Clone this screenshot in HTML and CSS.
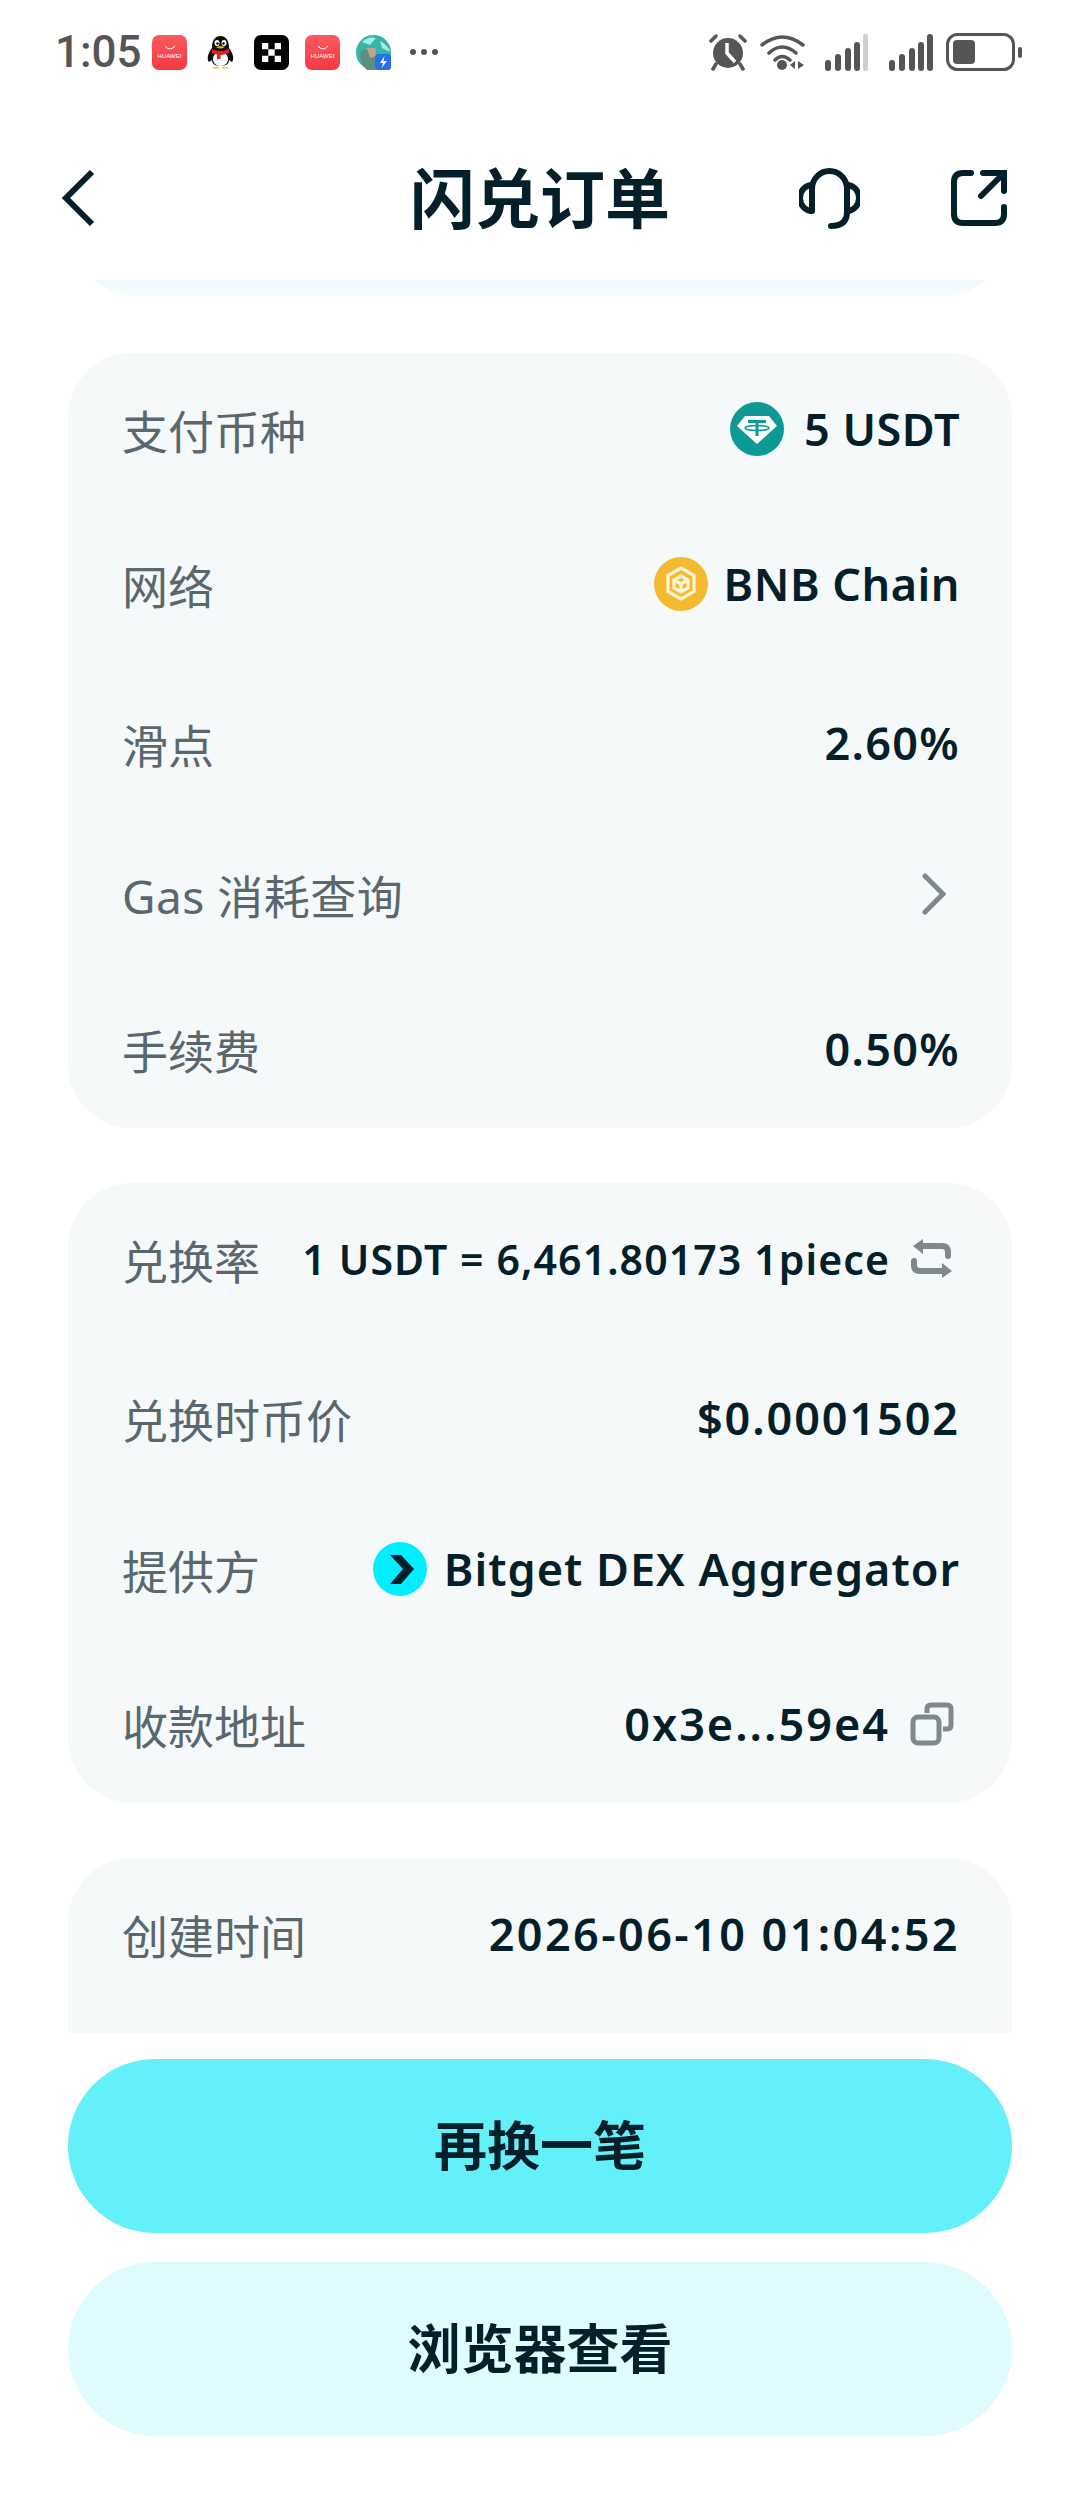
FILE: index.html
```html
<!DOCTYPE html>
<html lang="zh">
    <head>
        <meta charset="utf-8">
        <title>闪兑订单</title>
        <link rel="stylesheet" href="styles.css">
    </head>
    <body>
        <div class="status-bar">
            <span class="time">1:05</span>
            <div class="status-apps">
                <div class="app-huawei">
                    <svg class="app-smile" viewBox="0 0 12 6"><path d="M1 1 Q6 7 11 1" fill="none" stroke="#fff" stroke-width="1"/></svg>
                    <span class="app-huawei-text">HUAWEI</span>
                </div>
                <svg class="app-icon" viewBox="0 0 35 35">
                    <path d="M17.500 1 C24 1 26 7 26 13 C29 17 32 23 29 27 L26 25 C26 28 24 31 17.500 31 C11 31 9 28 9 25 L6 27 C3 23 6 17 9 13 C9 7 11 1 17.500 1 Z" fill="#0a0a0a"/>
                    <path d="M17.500 17 C23 17 25 21 25 24 C25 28 22 31 17.500 31 C13 31 10 28 10 24 C10 21 12 17 17.500 17 Z" fill="#fff"/>
                    <path d="M9 14 Q17.500 18 26 14 L26 18 Q20 20 17.500 20 L17.500 24 L14 24 L14 19.500 Q11 19 9 18 Z" fill="#e0201f"/>
                    <ellipse cx="14" cy="8" rx="2.500" ry="3" fill="#fff"/>
                    <ellipse cx="21" cy="8" rx="2.500" ry="3" fill="#fff"/>
                    <circle cx="14.500" cy="8.500" r="1.200" fill="#000"/>
                    <circle cx="20.500" cy="8.500" r="1.200" fill="#000"/>
                    <path d="M13 12 Q17.500 10 22 12 Q17.500 15 13 12 Z" fill="#f5a81c"/>
                    <path d="M10 32 H16 V33.500 H10 Z M19 32 H25 V33.500 H19 Z" fill="#f5c33b"/>
                </svg>
                <svg class="app-icon" viewBox="0 0 35 35">
                    <rect width="35" height="35" rx="7" fill="#000"/>
                    <path d="M8 8 H14.300 V14.300 H8 Z M20.700 8 H27 V14.300 H20.700 Z M14.300 14.300 H20.700 V20.700 H14.300 Z M8 20.700 H14.300 V27 H8 Z M20.700 20.700 H27 V27 H20.700 Z" fill="#fff"/>
                </svg>
                <div class="app-huawei">
                    <svg class="app-smile" viewBox="0 0 12 6"><path d="M1 1 Q6 7 11 1" fill="none" stroke="#fff" stroke-width="1"/></svg>
                    <span class="app-huawei-text">HUAWEI</span>
                </div>
                <svg class="app-icon" viewBox="0 0 35 35">
                    <circle cx="17.500" cy="17.500" r="17.500" fill="#35b5a6"/>
                    <path d="M6 7 Q12 1 20 3 L14 10 Z M24 6 Q32 10 34 17 L26 13 Z" fill="#a5ece0"/>
                    <path d="M5 16 L18 13 L22 22 L19 35 H11 Q5 30 4 22 Z" fill="#5e8f7e"/>
                    <path d="M11 13 L19 13 L21 21 L14 23 Z" fill="#c2a48e"/>
                    <rect x="19" y="19" width="16" height="16" rx="3" fill="#2571e8"/>
                    <path d="M28.500 21 L24 28 H27 L25.500 33 L31 26 H27.500 Z" fill="#fff"/>
                </svg>
            </div>
            <div class="status-dots"><i></i><i></i><i></i></div>
            <div class="status-right">
                <svg class="icon-alarm" viewBox="0 0 38 38">
                    <circle cx="19" cy="20" r="15" fill="#555"/>
                    <path d="M2 8 L7 3 M31 3 L36 8 M7 31 L4 36 M31 31 L34 36" stroke="#555" stroke-width="3.500" stroke-linecap="round" fill="none"/>
                    <path d="M18 10 V20 L26 29" stroke="#fff" stroke-width="3.500" fill="none"/>
                </svg>
                <svg class="icon-wifi" viewBox="0 0 45 38">
                    <path d="M2 12 Q22 -4 43 12 M9 20 Q22 8 36 20 M15 27 Q22 20 30 27" stroke="#555" stroke-width="3.500" stroke-linecap="round" fill="none"/>
                    <circle cx="22" cy="32" r="5" fill="#555"/>
                    <path d="M35 28 V36 L30 32 Z M38 28 L44 32 L38 36 Z" fill="#555"/>
                </svg>
                <svg class="icon-signal" viewBox="0 0 44 38">
                    <rect x="0" y="27" width="6" height="11" rx="3" fill="#555"/>
                    <rect x="10" y="21" width="6" height="17" rx="3" fill="#555"/>
                    <rect x="20" y="15" width="6" height="23" rx="3" fill="#555"/>
                    <rect x="29" y="9" width="6" height="29" rx="3" fill="#555"/>
                    <rect x="38" y="1" width="5" height="37" rx="2" fill="#cfcfcf"/>
                </svg>
                <svg class="icon-signal" viewBox="0 0 44 38">
                    <rect x="0" y="27" width="6" height="11" rx="3" fill="#555"/>
                    <rect x="10" y="21" width="6" height="17" rx="3" fill="#555"/>
                    <rect x="20" y="15" width="6" height="23" rx="3" fill="#555"/>
                    <rect x="29" y="9" width="6" height="29" rx="3" fill="#555"/>
                    <rect x="38" y="1" width="6" height="37" rx="3" fill="#555"/>
                </svg>
                <svg class="icon-battery" viewBox="0 0 76 38">
                    <rect x="1.500" y="1.500" width="66" height="35" rx="10" fill="none" stroke="#555" stroke-width="3"/>
                    <rect x="7" y="7" width="22" height="24" rx="4" fill="#555"/>
                    <rect x="72" y="14" width="4" height="11" rx="2" fill="#555"/>
                </svg>
            </div>
        </div>

        <div class="nav-bar">
            <div class="nav-left">
                <svg class="icon-back" viewBox="0 0 34 58"><path d="M31 3 L5 29 L31 55" fill="none" stroke="#03202a" stroke-width="6"/></svg>
            </div>
            <h1 class="title">闪兑订单</h1>
            <div class="nav-right">
                <svg class="icon-headset" viewBox="0 0 61 61">
                    <path d="M13 43 V21 A17.500 18 0 0 1 48 21 V44 Q48 58 32 58" fill="none" stroke="#03202a" stroke-width="6" stroke-linecap="round"/>
                    <path d="M13 17 A12 13 0 0 0 13 43 M48 17 A12 13 0 0 1 48 43" fill="none" stroke="#03202a" stroke-width="6"/>
                </svg>
                <svg class="icon-share" viewBox="0 0 56 56">
                    <path d="M20 3 H12 Q3 3 3 12 V44 Q3 53 12 53 H44 Q53 53 53 44 V37" fill="none" stroke="#03202a" stroke-width="6" stroke-linecap="round"/>
                    <path d="M32 3 H53 V21 M52 4 L30 26" fill="none" stroke="#03202a" stroke-width="6" stroke-linecap="round"/>
                </svg>
            </div>
        </div>

        <div class="content">
            <div class="card-tail"></div>

            <div class="card">
                <div class="row">
                    <span class="label">支付币种</span>
                    <div class="value">
                        <svg class="coin" viewBox="0 0 54 54">
                            <circle cx="27" cy="27" r="27" fill="#0d9a94"/>
                            <path d="M15 14 H39 L47 24 L27 42 L7 24 Z" fill="#fff"/>
                            <path d="M18 18 H36 V21 H28.500 V34 H25.500 V21 H18 Z" fill="#0d9a94"/>
                            <ellipse cx="27" cy="26" rx="12" ry="2.500" fill="none" stroke="#0d9a94" stroke-width="1.500"/>
                        </svg>
                        <span>5 USDT</span>
                    </div>
                </div>
                <div class="row">
                    <span class="label">网络</span>
                    <div class="value value-chain">
                        <svg class="coin" viewBox="0 0 54 54">
                            <circle cx="27" cy="27" r="27" fill="#f3b92f"/>
                            <path d="M27 11 L40 18.500 V34.500 L27 42 L14 34.500 V18.500 Z M27 19 L34 23 V31 L27 35 L20 31 V23 Z M20 23 L27 27 L34 23 M27 27 V35" fill="none" stroke="#fdf3d6" stroke-width="3.200"/>
                        </svg>
                        <span>BNB Chain</span>
                    </div>
                </div>
                <div class="row row-low">
                    <span class="label">滑点</span>
                    <div class="value value-percent"><span>2.60%</span></div>
                </div>
                <div class="row">
                    <span class="label label-gas">Gas 消耗查询</span>
                    <svg class="icon-chevron" viewBox="0 0 24 42"><path d="M3 3 L21 21 L3 39" fill="none" stroke="#7f898c" stroke-width="5" stroke-linecap="round"/></svg>
                </div>
                <div class="row">
                    <span class="label">手续费</span>
                    <div class="value value-percent"><span>0.50%</span></div>
                </div>
            </div>

            <div class="card">
                <div class="row">
                    <span class="label">兑换率</span>
                    <div class="value value-rate">
                        <span>1 USDT = 6,461.80173 1piece</span>
                        <svg class="icon-action" viewBox="0 0 44 44">
                            <path d="M3 9 L13 2 V17 Z M42 34 L32 26 V41 Z" fill="#7f898c"/>
                            <path d="M12 9 H32 Q38 9 38 15 V19 M4 24 V28 Q4 34 10 34 H33" fill="none" stroke="#7f898c" stroke-width="6" stroke-linecap="round"/>
                        </svg>
                    </div>
                </div>
                <div class="row row-low">
                    <span class="label">兑换时币价</span>
                    <div class="value value-digits"><span>$0.0001502</span></div>
                </div>
                <div class="row">
                    <span class="label">提供方</span>
                    <div class="value value-name">
                        <svg class="coin" viewBox="0 0 54 54">
                            <circle cx="27" cy="27" r="27" fill="#00eeff"/>
                            <path d="M17 13 H28 L41 27 L28 42 H17 L30 27 Z" fill="#03202a"/>
                        </svg>
                        <span>Bitget DEX Aggregator</span>
                    </div>
                </div>
                <div class="row">
                    <span class="label">收款地址</span>
                    <div class="value value-address">
                        <span>0x3e...59e4</span>
                        <svg class="icon-action" viewBox="0 0 44 44">
                            <path d="M17 11 V7 Q17 3 21 3 H37 Q41 3 41 7 V23 Q41 27 37 27 H33" fill="none" stroke="#7f898c" stroke-width="5"/>
                            <rect x="3" y="15" width="26" height="26" rx="5" fill="none" stroke="#7f898c" stroke-width="5"/>
                        </svg>
                    </div>
                </div>
            </div>

            <div class="card card-cut">
                <div class="row">
                    <span class="label">创建时间</span>
                    <div class="value value-date"><span>2026-06-10 01:04:52</span></div>
                </div>
            </div>
        </div>

        <div class="footer">
            <button class="button button-main">再换一笔</button>
            <button class="button button-light">浏览器查看</button>
        </div>
    </body>
</html>
```

FILE: styles.css
```css
* {
    box-sizing: border-box;
    font-family: "Noto Sans", "Noto Sans CJK SC", sans-serif;
}
body {
    margin: 0;
    width: 1080px;
    height: 2504px;
    overflow: hidden;
    background-color: #fff;
    color: #03202a;
}
.status-bar {
    height: 104px;
    padding: 0 58px 0 55px;
    display: flex;
    align-items: center;
}
.time {
    font-family: Roboto, sans-serif;
    font-size: 44px;
    font-weight: 500;
    color: #555;
    width: 84px;
}
.status-apps {
    display: flex;
    align-items: center;
    gap: 16px;
    margin-left: 13px;
}
.app-icon {
    width: 35px;
    height: 35px;
}
.app-huawei {
    width: 35px;
    height: 35px;
    border-radius: 7px;
    background: linear-gradient(#fb5a5f, #f23a44);
    display: flex;
    flex-direction: column;
    align-items: center;
    justify-content: center;
    gap: 2px;
}
.app-smile {
    width: 12px;
    height: 6px;
}
.app-huawei-text {
    font-family: "Liberation Sans", sans-serif;
    font-size: 6px;
    line-height: 7px;
    color: #fff;
}
.status-dots {
    display: flex;
    gap: 5px;
    margin-left: 19px;
}
.status-dots i {
    width: 6px;
    height: 6px;
    border-radius: 50%;
    background-color: #555;
}
.status-right {
    display: flex;
    align-items: center;
    margin-left: auto;
}
.icon-alarm {
    width: 38px;
    height: 38px;
    margin-right: 13px;
}
.icon-wifi {
    width: 45px;
    height: 38px;
    margin-right: 20px;
}
.icon-signal {
    width: 44px;
    height: 38px;
    margin-right: 20px;
}
.icon-signal + .icon-signal {
    margin-right: 13px;
}
.icon-battery {
    width: 76px;
    height: 38px;
}
.nav-bar {
    height: 176px;
    padding: 12px 73px 0 73px;
    display: grid;
    grid-template-columns: 1fr auto 1fr;
    align-items: center;
}
.nav-left {
    display: flex;
    margin-left: -12px;
}
.icon-back {
    width: 34px;
    height: 58px;
}
.title {
    margin: 0;
    font-size: 65px;
    font-weight: 700;
    line-height: 80px;
}
.nav-right {
    display: flex;
    justify-content: flex-end;
    align-items: center;
    gap: 91px;
}
.icon-headset {
    width: 61px;
    height: 61px;
}
.icon-share {
    width: 56px;
    height: 56px;
}
.content {
    height: 1753px;
    overflow: hidden;
    padding: 0 68px;
    display: flex;
    flex-direction: column;
    gap: 55px;
}
.card-tail {
    flex: none;
    height: 60px;
    margin: -43px 8px 1px;
    border-radius: 0 0 60px 60px;
    background: linear-gradient(#f1f9fc 72%, #f9fcfe);
}
.card {
    flex: none;
    background-color: #f5f9fa;
    border-radius: 64px;
    padding: 0 52px 0 54px;
}
.card-cut {
    padding-bottom: 120px;
}
.row {
    height: 155px;
    padding-bottom: 4px;
    display: flex;
    align-items: center;
    justify-content: space-between;
}
.row-low {
    padding: 4px 0 0;
}
.label {
    font-size: 46px;
    color: #5a686d;
    white-space: nowrap;
}
.label-gas {
    letter-spacing: 0.5px;
}
.value {
    display: flex;
    align-items: center;
    gap: 20px;
    font-size: 45px;
    font-weight: 600;
    letter-spacing: 0.5px;
    white-space: nowrap;
}
.value-chain {
    gap: 16px;
}
.value-percent {
    letter-spacing: 1.3px;
}
.value-digits {
    letter-spacing: 1.9px;
}
.value-name {
    gap: 17px;
    letter-spacing: 1px;
}
.value-date {
    letter-spacing: 2.4px;
}
.value-rate {
    font-size: 41px;
    letter-spacing: 1.1px;
}
.value-address {
    letter-spacing: 2px;
}
.coin {
    width: 54px;
    height: 54px;
    flex: none;
}
.icon-chevron {
    width: 24px;
    height: 42px;
    margin-right: 14px;
}
.icon-action {
    width: 44px;
    height: 44px;
    flex: none;
    margin-right: 6px;
}
.footer {
    padding: 26px 68px 0;
    display: flex;
    flex-direction: column;
    gap: 29px;
}
.button {
    height: 174px;
    padding: 0 0 6px;
    border: none;
    border-radius: 87px;
    font-size: 53px;
    font-weight: 600;
    color: #03202a;
}
.button-main {
    background-color: #63f0f8;
}
.button-light {
    background-color: #e0fbfd;
}
```
